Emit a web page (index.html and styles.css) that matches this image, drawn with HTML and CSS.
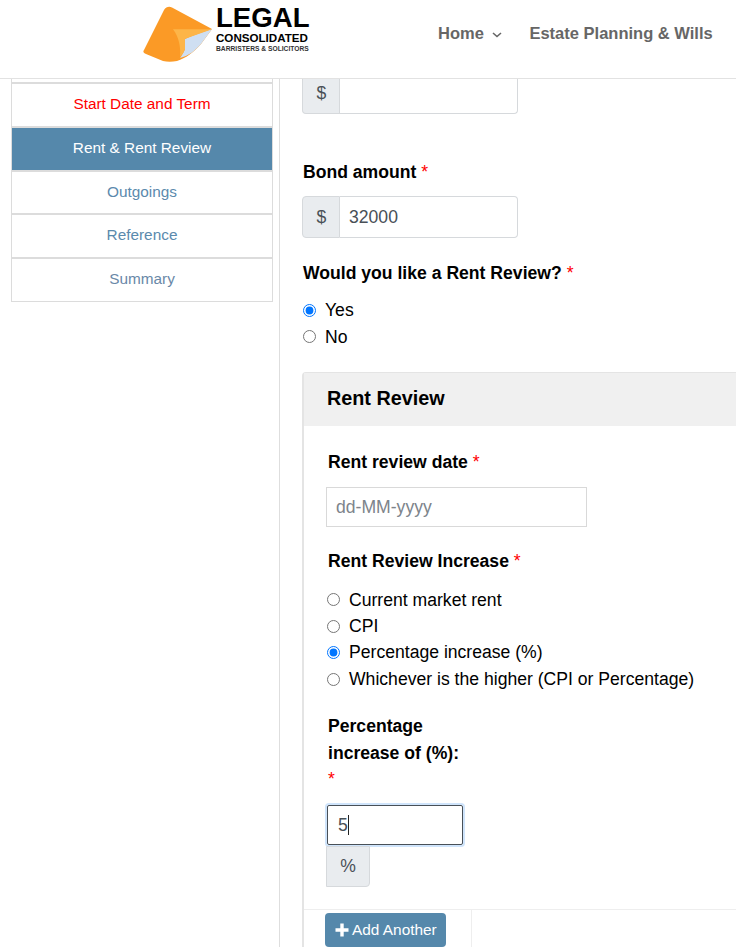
FILE: index.html
```html
<!DOCTYPE html>
<html lang="en">
<head>
<meta charset="utf-8">
<title>Legal Consolidated</title>
<link rel="stylesheet" href="styles.css">
</head>
<body>
<header class="site-header">
  <a class="logo">
    <svg class="logo-mark" width="73" height="56" viewBox="0 0 73 56">
      <path d="M21 4C23 1 26 0 29 1.500L69 23L58 38C50 47 43 52 34 55C29 56 24 56 20 55L3 48C0 47 0 45 1 44Z" fill="#fb9a26"/>
      <path d="M69 23C60 26 50 29 42 33V43C41 46 39 49 37 52C45 50 52 45 58 38Z" fill="#cfdff2"/>
      <path d="M30 23.300H69L42 32.700V43C41 46 39 49 37 51C38 42 36 31 30 23.300Z" fill="#fdb548"/>
    </svg>
    <span class="logo-text">
      <span class="logo-legal">LEGAL</span>
      <span class="logo-cons">CONSOLIDATED</span>
      <span class="logo-sub">BARRISTERS &amp; SOLICITORS</span>
    </span>
  </a>
  <nav class="nav">
    <a class="nav-link">Home
      <svg class="chev" width="10" height="6" viewBox="0 0 10 6"><path d="M1 1L5 4.500L9 1" fill="none" stroke="#666" stroke-width="1.600"/></svg>
    </a>
    <a class="nav-link">Estate Planning &amp; Wills</a>
  </nav>
</header>

<div class="layout">
  <aside class="sidebar">
    <div class="steps">
      <a class="step step-stub"></a>
      <a class="step step-error">Start Date and Term</a>
      <a class="step step-active">Rent &amp; Rent Review</a>
      <a class="step">Outgoings</a>
      <a class="step">Reference</a>
      <a class="step step-summary">Summary</a>
    </div>
  </aside>

  <main class="content">
    <div class="input-group input-group-cut">
      <span class="addon">$</span>
      <input class="input" type="text" value="">
    </div>

    <label class="label label-bond">Bond amount <span class="req">*</span></label>
    <div class="input-group">
      <span class="addon">$</span>
      <input class="input" type="text" value="32000">
    </div>

    <label class="label label-would">Would you like a Rent Review? <span class="req">*</span></label>
    <div class="radios">
      <label class="radio"><input type="radio" name="review" checked>Yes</label>
      <label class="radio"><input type="radio" name="review">No</label>
    </div>

    <section class="card">
      <h2 class="card-title">Rent Review</h2>
      <div class="card-body">
        <label class="label label-date">Rent review date <span class="req">*</span></label>
        <input class="date-input" type="text" placeholder="dd-MM-yyyy">

        <label class="label label-increase">Rent Review Increase <span class="req">*</span></label>
        <div class="radios radios-inc">
          <label class="radio"><input type="radio" name="inc">Current market rent</label>
          <label class="radio"><input type="radio" name="inc">CPI</label>
          <label class="radio"><input type="radio" name="inc" checked>Percentage increase (%)</label>
          <label class="radio"><input type="radio" name="inc">Whichever is the higher (CPI or Percentage)</label>
        </div>

        <label class="label label-percent">Percentage increase of (%): <span class="req req-block">*</span></label>
        <div class="focus-input">5<span class="caret"></span></div>
        <span class="addon-box">%</span>
      </div>
      <div class="card-foot">
        <div class="foot-cell">
          <button class="btn" type="button">
            <svg width="14" height="14" viewBox="0 0 14 14"><path d="M7 0.500V13.500M0.500 7H13.500" stroke="#fff" stroke-width="3.400"/></svg>
            Add Another
          </button>
        </div>
      </div>
    </section>
  </main>
</div>
</body>
</html>
```
FILE: styles.css
```css
* { box-sizing: border-box; }
html, body { margin: 0; height: 947px; overflow: hidden; background: #fff; }
body { font-family: "Liberation Sans", Arial, sans-serif; color: #000; }

.site-header {
  height: 79px;
  border-bottom: 1px solid #e2e2e2;
  display: flex;
  align-items: flex-start;
  padding-left: 143px;
}
.logo { display: flex; width: 295px; }
.logo-mark { margin-top: 6px; flex: none; }
.logo-text { display: flex; flex-direction: column; color: #000; font-weight: 700; }
.logo-legal { font-size: 27.6px; line-height: 22px; margin-top: 7px; }
.logo-cons { font-size: 11.6px; line-height: 10px; margin-top: 4px; }
.logo-sub { font-size: 6.7px; line-height: 8px; margin-top: 2px; color: #333; white-space: nowrap; }

.nav { display: flex; gap: 27px; margin-top: 24px; }
.nav-link { font-size: 16.5px; line-height: 19px; font-weight: 700; color: #666; white-space: nowrap; }
.chev { margin-left: 4px; vertical-align: 1px; }

.layout { display: flex; height: 868px; }
.sidebar { width: 280px; flex: none; padding-left: 11px; border-right: 1px solid #dedede; }
.steps { width: 262px; }
.step {
  display: block;
  height: 43.8px;
  border: 1px solid #dcdcdc;
  font-size: 15.36px;
  line-height: 39px;
  text-align: center;
  color: #5b8aad;
}
.step-stub { height: 4px; border-top: 0; }
.step-error { color: #f00; }
.step-active { background: #5588ab; color: #fff; }
.step-summary { color: #6a88a8; }

.content { flex: 1; min-width: 0; padding-left: 22px; font-size: 17.6px; }
.input-group { display: flex; width: 216px; height: 42px; }
.input-group-cut { height: 35px; }
.addon {
  width: 38px;
  flex: none;
  display: flex;
  align-items: center;
  justify-content: center;
  padding-left: 1px;
  background: #e9ecef;
  border: 1px solid #d6d9dc;
  border-radius: 4px 0 0 4px;
  color: #495057;
  font-size: 17.6px;
}
.input {
  flex: 1;
  min-width: 0;
  border: 1px solid #d6d9dc;
  border-left: 0;
  border-radius: 0 4px 4px 0;
  padding: 0 9px;
  font: 17.6px "Liberation Sans", Arial, sans-serif;
  color: #495057;
  outline: 0;
}
.input-group-cut .addon { border-top: 0; border-radius: 0 0 0 4px; padding-bottom: 5px; }
.input-group-cut .input { border-top: 0; border-radius: 0 0 4px 0; }

.label { display: block; font-weight: 700; font-size: 17.6px; line-height: 26.4px; }
.req { color: #f00; font-weight: 400; }
.req-block { display: block; }
.label-bond { margin: 45px 0 11px 1px; }
.label-would { margin: 21.300px 0 11px 1px; }

.radios { display: flex; flex-direction: column; margin-left: 1px; }
.radio { display: flex; align-items: center; font-size: 17.6px; line-height: 26.4px; }
.radio input { margin: 0 9px 0 0; width: 13px; height: 13px; flex: none; }
.radios + .card { margin-top: 22.3px; }

.card { border: 1px solid #e4e4e4; border-left-width: 2px; border-right: 0; border-bottom: 0; border-radius: 4px 0 0 0; }
.card-title {
  margin: 0;
  height: 53px;
  padding: 12px 23px 0;
  background: #f0f0f0;
  font-size: 19.8px;
  line-height: 26px;
  font-weight: 700;
}
.card-body { padding: 22.600px 0 0 22px; height: 483px; }
.label-date { margin: 0 0 11.400px 2px; }
.date-input {
  display: block;
  width: 261px;
  height: 40px;
  border: 1px solid #d9d9d9;
  padding: 1px 9px 0;
  font: 17.6px "Liberation Sans", Arial, sans-serif;
  outline: 0;
  border-radius: 0;
}
.date-input::placeholder { color: #7d848b; opacity: 1; }
.label-increase { margin: 21.600px 0 12px 2px; }
.radios-inc { margin-left: 1px; }
.radios-inc .radio input { margin-right: 9px; }
.label-percent { width: 140px; margin: 21px 0 12.600px 2px; }
.focus-input {
  width: 136px;
  height: 40px;
  margin-left: 1px;
  padding-left: 10px;
  border: 1px solid #495057;
  border-radius: 2px;
  box-shadow: 0 0 0 2px #cfe4fb;
  font-size: 17.6px;
  line-height: 38px;
  color: #495057;
}
.caret { display: inline-block; width: 1px; height: 20px; background: #222; vertical-align: -4px; }
.addon-box {
  display: flex;
  align-items: center;
  justify-content: center;
  width: 44px;
  height: 41px;
  margin-top: 1px;
  background: #e9ecef;
  border: 1px solid #d6d9dc;
  border-radius: 0 0 4px 0;
  color: #495057;
  font-size: 17.6px;
}
.card-foot { border-top: 1px solid #eee; height: 60px; }
.foot-cell { width: 168px; height: 60px; padding: 3px 0 0 21px; border-right: 1px solid #eee; }
.btn {
  display: flex;
  align-items: center;
  gap: 3px;
  width: 121px;
  height: 34px;
  padding: 0 0 0 10px;
  border: 0;
  border-radius: 4px;
  background: #5588ab;
  color: #fff;
  font: 15.4px "Liberation Sans", Arial, sans-serif;
  white-space: nowrap;
}
```
